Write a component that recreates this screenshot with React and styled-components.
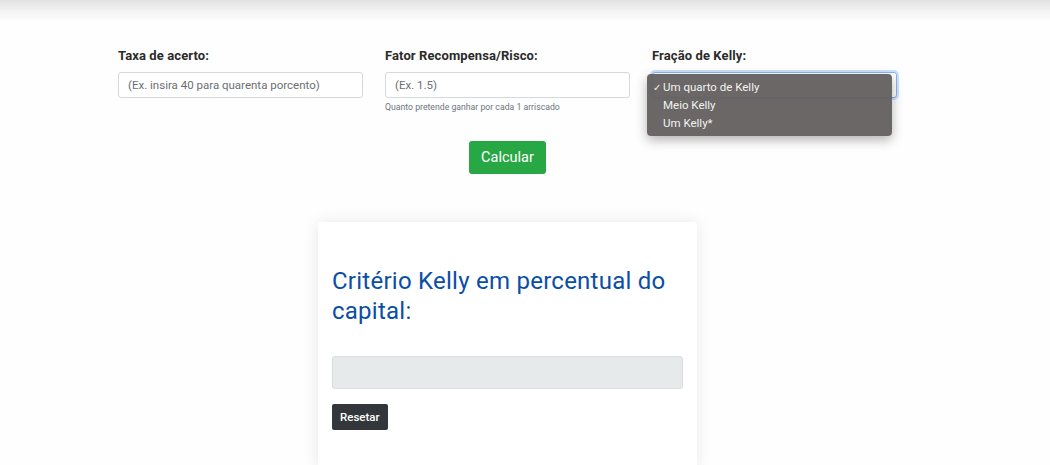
import React from "react";
import styled, { createGlobalStyle } from "styled-components";

const Global = createGlobalStyle`
  html, body { margin: 0; padding: 0; background: #fefefe; }
  body { font-family: Roboto, "Liberation Sans", sans-serif; color: #212529; }
  * { box-sizing: border-box; }
`;

const TopShade = styled.div`
  height: 22px;
  background: linear-gradient(#e2e2e2, #f4f4f4 55%, #fefefe);
`;

const Page = styled.div`
  padding-right: 35px;
  height: 443px;
  overflow: hidden;
`;

const Container = styled.div`
  width: 779px;
  margin: 0 auto;
`;

const FieldRow = styled.div`
  display: grid;
  grid-template-columns: repeat(3, 245px);
  column-gap: 22px;
  margin-top: 26px;
`;

const Field = styled.div`
  position: relative;
  display: flex;
  flex-direction: column;
`;

const Label = styled.label`
  font-size: 13px;
  font-weight: 700;
  letter-spacing: 0.1px;
  color: #2b2b2b;
  line-height: 16px;
  margin-bottom: 8px;
`;

const Input = styled.div`
  height: 26px;
  border: 1px solid ${(p) => (p.$focus ? "#86b7f0" : "#d6d9dc")};
  box-shadow: ${(p) => (p.$focus ? "0 0 0 2px rgba(120,170,240,0.35)" : "none")};
  border-radius: 3px;
  background: #fff;
  padding: 0 9px;
  display: flex;
  align-items: center;
  font-size: 11.5px;
  color: #6b6f73;
`;

const Help = styled.small`
  font-size: 8.7px;
  color: #6c757d;
  margin-top: 4px;
`;

const Menu = styled.div`
  position: absolute;
  left: -5px;
  top: 26px;
  width: 245px;
  height: 62px;
  background: rgba(98, 93, 93, 0.94);
  border-radius: 4px;
  box-shadow: 0 4px 12px rgba(0, 0, 0, 0.3);
  padding: 4px 0 0 0;
  display: flex;
  flex-direction: column;
`;

const MenuItem = styled.div`
  height: 18px;
  display: flex;
  align-items: center;
  font-size: 11.5px;
  color: #f2f2f2;
  padding-left: 16px;
  position: relative;
`;

const Check = styled.span`
  position: absolute;
  left: 6px;
  font-size: 10px;
`;

const Actions = styled.div`
  display: flex;
  justify-content: center;
  margin-top: 29px;
`;

const GreenButton = styled.button`
  background: #28a745;
  color: #fff;
  border: none;
  border-radius: 3px;
  height: 33px;
  padding: 0 12px;
  font-family: inherit;
  font-size: 14.5px;
`;

const Card = styled.div`
  width: 379px;
  margin: 48px auto 0;
  background: #fff;
  box-shadow: 0 0 16px rgba(0, 0, 0, 0.09);
  border-radius: 3px;
  padding: 44px 14px 40px;
`;

const Title = styled.h2`
  margin: 0;
  font-weight: 400;
  font-size: 24px;
  line-height: 30px;
  color: #0b4ea6;
  letter-spacing: 0.25px;
`;

const Output = styled.div`
  margin-top: 30px;
  height: 33px;
  background: #e7eaeb;
  border: 1px solid #dadddf;
  border-radius: 3px;
`;

const DarkButton = styled.button`
  margin-top: 15px;
  background: #33373b;
  color: #fff;
  border: none;
  border-radius: 2px;
  height: 26px;
  padding: 0 8px;
  font-family: inherit;
  font-size: 11.5px;
  font-weight: 500;
`;

export default function App() {
  return (
    <>
      <Global />
      <TopShade />
      <Page>
        <Container>
          <FieldRow>
            <Field>
              <Label>Taxa de acerto:</Label>
              <Input>(Ex. insira 40 para quarenta porcento)</Input>
            </Field>
            <Field>
              <Label>Fator Recompensa/Risco:</Label>
              <Input>(Ex. 1.5)</Input>
              <Help>Quanto pretende ganhar por cada 1 arriscado</Help>
            </Field>
            <Field>
              <Label>Fração de Kelly:</Label>
              <Input $focus />
              <Menu>
                <MenuItem>
                  <Check>✓</Check>Um quarto de Kelly
                </MenuItem>
                <MenuItem>Meio Kelly</MenuItem>
                <MenuItem>Um Kelly*</MenuItem>
              </Menu>
            </Field>
          </FieldRow>
          <Actions>
            <GreenButton>Calcular</GreenButton>
          </Actions>
          <Card>
            <Title>Critério Kelly em percentual do capital:</Title>
            <Output />
            <DarkButton>Resetar</DarkButton>
          </Card>
        </Container>
      </Page>
    </>
  );
}
